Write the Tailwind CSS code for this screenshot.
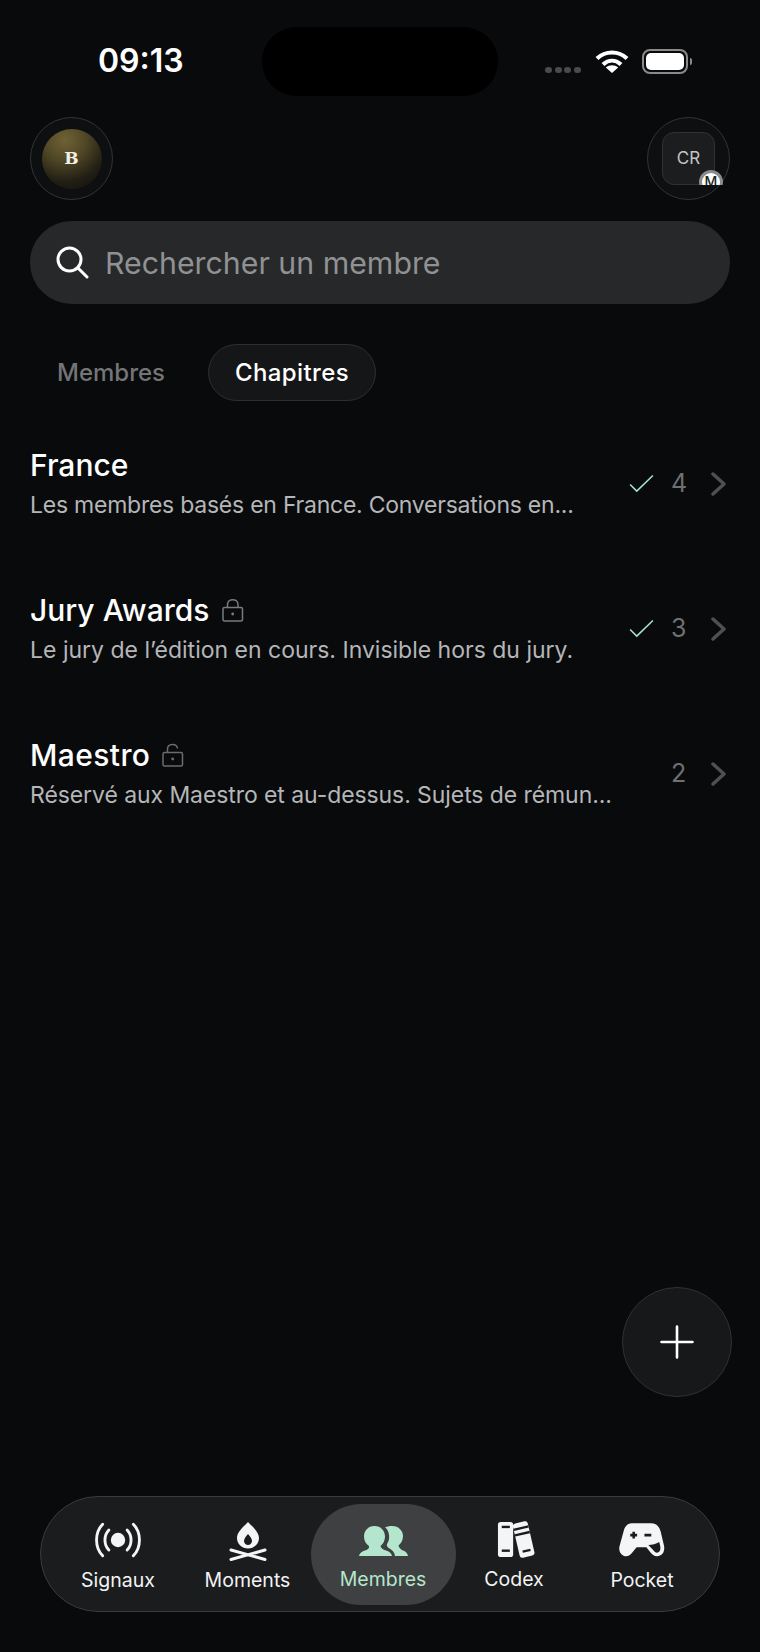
<!DOCTYPE html>
<html lang="fr">
<head>
    <meta charset="UTF-8">
    <meta name="viewport" content="width=device-width, initial-scale=1.0">
    <title>Chapitres</title>
    <script src="https://cdn.jsdelivr.net/npm/@tailwindcss/browser@4"></script>
</head>
<body class="bg-[#090a0c]">
    <div class="relative w-[760px] h-[1652px] overflow-hidden bg-[#090a0c] text-white font-['Inter',sans-serif] flex flex-col">

        <!-- Status bar -->
        <div class="relative h-[117px] shrink-0">
            <div class="absolute left-[262px] top-[27px] w-[236px] h-[69px] rounded-full bg-black"></div>
            <div class="absolute left-[98px] top-[42px] text-[32px] leading-[38px] font-semibold">09:13</div>
            <div class="absolute left-[545px] top-[67px] flex gap-[2.5px]">
                <span class="w-[7px] h-[6px] rounded-full bg-[#4a4b4d]"></span>
                <span class="w-[7px] h-[6px] rounded-full bg-[#4a4b4d]"></span>
                <span class="w-[7px] h-[6px] rounded-full bg-[#4a4b4d]"></span>
                <span class="w-[7px] h-[6px] rounded-full bg-[#4a4b4d]"></span>
            </div>
            <svg class="absolute left-[595px] top-[49px]" width="34" height="25" viewBox="0 0 34 25" fill="none">
                <path d="M2 9.500C10.500 1.500 23.500 1.500 32 9.500" stroke="white" stroke-width="4.200"/>
                <path d="M8 15.500C13.500 10.500 20.500 10.500 26 15.500" stroke="white" stroke-width="4.200"/>
                <path d="M17 24L10.800 18.500C14.500 15.500 19.500 15.500 23.200 18.500Z" fill="white"/>
            </svg>
            <div class="absolute left-[642px] top-[49px] w-[46px] h-[25px] rounded-[8px] border-2 border-[#8a8a8a] p-[2px]">
                <div class="w-full h-full rounded-[5px] bg-white"></div>
            </div>
            <div class="absolute left-[690px] top-[58px] w-[2px] h-[7px] rounded-r-full bg-[#8a8a8a]"></div>
        </div>

        <!-- Avatars -->
        <div class="flex justify-between px-[30px] shrink-0">
            <div class="w-[83px] h-[83px] rounded-full border border-[#333437] bg-[#0e0f11] flex items-center justify-center">
                <div class="w-[60px] h-[60px] rounded-full bg-[radial-gradient(circle_at_38%_18%,#6f6232_0%,#4f4626_35%,#221f14_68%,#0e0e0c_100%)] flex items-center justify-center font-['DejaVu_Serif',serif] font-bold text-[17px] text-[#f2f0e6]">B</div>
            </div>
            <div class="w-[83px] h-[83px] rounded-full border border-[#333437] bg-[#0e0f11] flex items-center justify-center">
                <div class="relative w-[53px] h-[53px] rounded-[12px] border border-[#303134] bg-[#1c1d1f] flex items-center justify-center text-[17px] text-[#c4c5c6]">
                    CR
                    <div class="absolute left-0 top-0 w-[70px] h-[52px] overflow-hidden">
                        <div class="absolute left-[36px] top-[37px] w-[24px] h-[24px] rounded-full bg-white border-[3px] border-[#8b8b8b] flex justify-center text-[14px] leading-[17px] font-medium text-[#222]">M</div>
                    </div>
                </div>
            </div>
        </div>

        <!-- Search -->
        <div class="mx-[30px] mt-[21px] h-[83px] shrink-0 rounded-full bg-[#27282a] flex items-center pl-[26px] gap-[16px]">
            <svg width="33" height="33" viewBox="0 0 33 33" fill="none" stroke="white" stroke-width="3" stroke-linecap="round">
                <circle cx="13.500" cy="13.500" r="11.500"/>
                <path d="M22 22L31 31"/>
            </svg>
            <span class="text-[30.300px] text-[#909193] relative top-[1px]">Rechercher un membre</span>
        </div>

        <!-- Tabs -->
        <div class="flex items-center mt-[40px] pl-[57px] gap-[43px] shrink-0">
            <span class="text-[24px] font-medium text-[#747577]">Membres</span>
            <span class="h-[57px] px-[26px] rounded-full border border-[#2e2f31] bg-[#151618] flex items-center text-[24px] tracking-[0.4px] font-medium text-white">Chapitres</span>
        </div>

        <!-- Chapter list -->
        <div class="flex flex-col mt-[44px] px-[30px]">
            <div class="h-[145px] flex items-start justify-between">
                <div>
                    <div class="text-[30px] leading-[40px] font-medium">France</div>
                    <div class="mt-[3px] text-[23px] leading-[34px] tracking-[-0.24px] text-[#b5b6b8]">Les membres basés en France. Conversations en...</div>
                </div>
                <div class="flex items-center mt-[20px] mr-[2px]">
                    <svg width="25" height="19" viewBox="0 0 26 20" fill="none" stroke="#a9e3c8" stroke-width="1.600"><path d="M1 11L8 18L25 1.500"/></svg>
                    <span class="ml-[17px] w-[19px] text-[25px] text-[#6f7072]">4</span>
                    <svg class="ml-[20px]" width="18" height="24" viewBox="0 0 18 24" fill="none" stroke="#4f5052" stroke-width="3.500" stroke-linecap="round" stroke-linejoin="round"><path d="M3 2L14 12L3 22"/></svg>
                </div>
            </div>
            <div class="h-[145px] flex items-start justify-between">
                <div>
                    <div class="flex items-center gap-[13px]">
                        <span class="text-[30px] leading-[40px] font-medium">Jury Awards</span>
                        <svg width="22" height="24" viewBox="0 0 22 24" fill="none" stroke="#7a7b7d" stroke-width="1.500"><rect x="1" y="9.500" width="19.500" height="13.500" rx="1.500"/><path d="M5.500 9.500V6.500C5.500 0 16 0 16 6.500V9.500"/><circle cx="10.700" cy="16" r="0.700" fill="#7a7b7d"/></svg>
                    </div>
                    <div class="mt-[3px] text-[23px] leading-[34px] text-[#b5b6b8]">Le jury de l’édition en cours. Invisible hors du jury.</div>
                </div>
                <div class="flex items-center mt-[20px] mr-[2px]">
                    <svg width="25" height="19" viewBox="0 0 26 20" fill="none" stroke="#a9e3c8" stroke-width="1.600"><path d="M1 11L8 18L25 1.500"/></svg>
                    <span class="ml-[17px] w-[19px] text-[25px] text-[#6f7072]">3</span>
                    <svg class="ml-[20px]" width="18" height="24" viewBox="0 0 18 24" fill="none" stroke="#4f5052" stroke-width="3.500" stroke-linecap="round" stroke-linejoin="round"><path d="M3 2L14 12L3 22"/></svg>
                </div>
            </div>
            <div class="h-[145px] flex items-start justify-between">
                <div>
                    <div class="flex items-center gap-[12px]">
                        <span class="text-[30px] leading-[40px] tracking-[0.4px] font-medium">Maestro</span>
                        <svg width="22" height="24" viewBox="0 0 22 24" fill="none" stroke="#6a6b6d" stroke-width="1.500"><rect x="1" y="9.500" width="19.500" height="13.500" rx="1.500"/><path d="M5.500 9.500V6C5.500 0 15 0 15.500 5.500"/><circle cx="10.700" cy="16" r="0.700" fill="#6a6b6d"/></svg>
                    </div>
                    <div class="mt-[3px] text-[23px] leading-[34px] tracking-[-0.08px] text-[#b5b6b8]">Réservé aux Maestro et au-dessus. Sujets de rémun...</div>
                </div>
                <div class="flex items-center mt-[20px] mr-[2px]">
                    <span class="w-[19px] text-[25px] text-[#6f7072]">2</span>
                    <svg class="ml-[20px]" width="18" height="24" viewBox="0 0 18 24" fill="none" stroke="#4f5052" stroke-width="3.500" stroke-linecap="round" stroke-linejoin="round"><path d="M3 2L14 12L3 22"/></svg>
                </div>
            </div>
        </div>

        <!-- Add button -->
        <button class="absolute left-[622px] top-[1287px] w-[110px] h-[110px] rounded-full border border-[#303133] bg-[#17181a] flex items-center justify-center">
            <svg width="34" height="34" viewBox="0 0 34 34" stroke="white" stroke-width="2.600" stroke-linecap="round"><path d="M17 1.500V32.500M1.500 17H32.500"/></svg>
        </button>

        <!-- Bottom nav -->
        <nav class="absolute left-[40px] top-[1496px] w-[680px] h-[116px] rounded-full border border-[#3a3b3d] bg-[#1b1c1e] grid grid-cols-[154px_105px_145px_116px_140px] items-center text-[19.500px] text-[#f2f3f4]">
            <div class="flex flex-col items-center pt-[9px]">
                <svg width="46" height="36" viewBox="0 0 48 36" fill="none" stroke="#f4f5f6" stroke-width="3" stroke-linecap="round">
                    <circle cx="24" cy="18" r="7.500" fill="#f4f5f6" stroke="none"/>
                    <path d="M14.500 7.500C9 13 9 23 14.500 28.500M33.500 7.500C39 13 39 23 33.500 28.500"/>
                    <path d="M8 1.500C-0.500 10 -0.500 26 8 34.500M40 1.500C48.500 10 48.500 26 40 34.500"/>
                </svg>
                <span class="mt-[7px] leading-[30px]">Signaux</span>
            </div>
            <div class="flex flex-col items-center pt-[8px] mr-[-11px] pr-[11px]">
                <svg width="40" height="40" viewBox="0 0 40 40" fill="none">
                    <path fill-rule="evenodd" d="M20 0C24 4.500 31 9.500 31 16C31 22 26 26.500 20 26.500C14 26.500 9 22 9 16C9 9.500 16 4.500 20 0ZM20 12C18 14.500 16 16.500 16 19C16 21.300 17.800 23 20 23C22.200 23 24 21.300 24 19C24 16.500 22 14.500 20 12Z" fill="#f4f5f6"/>
                    <path d="M3 28L37 37.500M37 28L3 37.500" stroke="#f4f5f6" stroke-width="3" stroke-linecap="round"/>
                </svg>
                <span class="mt-[3px] leading-[30px]">Moments</span>
            </div>
            <div class="col-start-3 ml-[11px] mr-[-11px] h-[101px] pt-[8px] rounded-full bg-[#3f4042] flex flex-col items-center justify-center text-[#b4e6cd]">
                <svg width="49" height="36" viewBox="0 -3 49 36" fill="#b4e6cd">
                    <path d="M33 0C40 0 44 5 44 10C44 14.500 42 17.500 39.500 19.500C40 22 42 23.500 44 24.500C46.500 25.500 48.500 27 49 30H36C35.500 26 33 24 30.500 22.500C28 21 27.500 19.500 28 18C30 15 30.500 12 30 9C29.500 5 28 2.500 26 1.500C28 0.500 30 0 33 0Z"/>
                    <path d="M15.500 0C22 0 26 5 26 10.500C26 15 24 18 21.500 20C22 22 24 23.500 27 24.500C30 25.500 32.500 27 33 30H0C0.500 27 3 25.500 6 24.500C9 23.500 10.500 22 10 20C7 18 5 15 5 10.500C5 5 9 0 15.500 0Z"/>
                </svg>
                <span class="mt-[5px] mr-[1px] leading-[30px]">Membres</span>
            </div>
            <div class="flex flex-col items-center pt-[5px] ml-[11px] mr-[-11px]">
                <svg class="ml-[4px]" width="38" height="40" viewBox="0 0 40 42" fill="none">
                    <rect x="1" y="2" width="16" height="37" rx="3" fill="#f4f5f6"/>
                    <rect x="5" y="6" width="8.500" height="2.500" fill="#1b1c1e"/>
                    <rect x="5" y="31" width="8.500" height="2.500" fill="#1b1c1e"/>
                    <g transform="rotate(-13 28 20)">
                        <rect x="20" y="2" width="16" height="37" rx="3" fill="#f4f5f6"/>
                        <rect x="20" y="7" width="16" height="2.500" fill="#1b1c1e"/>
                        <rect x="20" y="13" width="16" height="2.500" fill="#1b1c1e"/>
                        <rect x="24" y="31.500" width="8.500" height="2.500" fill="#1b1c1e"/>
                    </g>
                </svg>
                <span class="mt-[4px] leading-[30px]">Codex</span>
            </div>
            <div class="flex flex-col items-center pt-[9px] ml-[11px] mr-[-11px]">
                <svg width="46" height="36" viewBox="0 0 47 36" fill="none">
                    <path fill-rule="evenodd" d="M13 1H33C38 1 41 4 42.500 9L46 24C47 29 45 34 39.500 34.500C36 34.800 34 33 32 30.500L28 25.500H18L13 31.500C11 34 8.500 35 6 34.500C1.500 33.500 -0.500 29 0.500 24.500L5 8C6 4 9 1 13 1Z" fill="#f4f5f6"/>
                    <path d="M11.500 13H18.500M15 9.500V16.500M26 13H33" stroke="#1b1c1e" stroke-width="2.600"/>
                    <path d="M30 23L36.500 30C38.500 32 41 31 42 28.500C42.800 26 42 23 41 20C38 22 34 23 30 23Z" fill="#1b1c1e"/>
                </svg>
                <span class="mt-[7px] leading-[30px]">Pocket</span>
            </div>
        </nav>
    </div>
</body>
</html>
